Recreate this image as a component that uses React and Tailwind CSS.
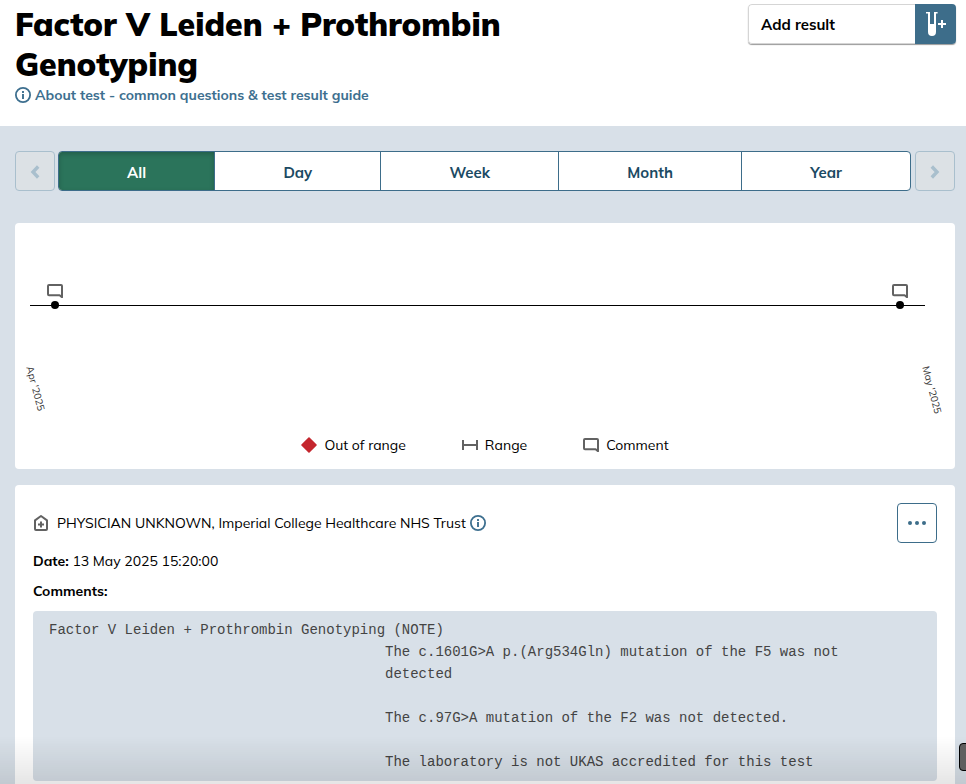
import React, { useState } from 'react';

const periods = ['All', 'Day', 'Week', 'Month', 'Year'];

const note = [
  'The c.1601G>A p.(Arg534Gln) mutation of the F5 was not detected',
  'The c.97G>A mutation of the F2 was not detected.',
  'The laboratory is not UKAS accredited for this test',
];

const InfoIcon = () => (
  <svg viewBox="0 0 16 16" className="w-4 h-4 shrink-0 text-[#3d6f8f]" fill="none" stroke="currentColor" aria-hidden="true">
    <circle cx="8" cy="8" r="7.1" strokeWidth="1.8" />
    <path d="M8 7v5" strokeWidth="1.9" />
    <path d="M8 4v2" strokeWidth="1.9" />
  </svg>
);

const CommentIcon = () => (
  <svg viewBox="0 0 16 14" className="w-4 h-[14px] shrink-0" fill="none" stroke="#626262" strokeWidth="2" strokeLinejoin="round" aria-hidden="true">
    <path d="M2 1h12a1 1 0 0 1 1 1v11.2L12.6 11.2H2a1 1 0 0 1-1-1V2a1 1 0 0 1 1-1z" />
  </svg>
);

const TubeIcon = () => (
  <svg viewBox="0 0 20 24" className="w-5 h-6" fill="#fff" aria-hidden="true">
    <path fillRule="evenodd" d="M0 0h4v12h4V0h3.6v1.6H10V20a4 4 0 0 1-8 0V1.6H0z" />
    <path d="M15 8h2v3h3v2h-3v3h-2v-3h-3v-2h3z" />
  </svg>
);

const Chevron = ({ flip }) => (
  <svg viewBox="0 0 10 14" className={flip ? 'w-[10px] h-[14px] rotate-180' : 'w-[10px] h-[14px]'} fill="none" stroke="#a9bfcd" strokeWidth="3.4" aria-hidden="true">
    <path d="M8.2 1.5L3 7L8.2 12.5" />
  </svg>
);

const Timeline = () => (
  <div className="relative h-[210px]">
    <div className="absolute left-[15px] right-[30px] top-[82px] h-px bg-black" />
    <div className="absolute left-8 top-[61px] flex flex-col items-center gap-[3px]">
      <CommentIcon />
      <span className="w-2 h-2 rounded-full bg-black" />
    </div>
    <div className="absolute right-[47px] top-[61px] flex flex-col items-center gap-[3px]">
      <CommentIcon />
      <span className="w-2 h-2 rounded-full bg-black" />
    </div>
    <span className="absolute left-5 top-[142px] origin-top-left rotate-75 whitespace-nowrap text-[10px] leading-3 text-[#333]">Apr '2025</span>
    <span className="absolute left-full top-[142px] origin-top-left rotate-75 -translate-x-6 whitespace-nowrap text-[10px] leading-3 text-[#333]">May '2025</span>
  </div>
);

const App = () => {
  const [period, setPeriod] = useState('All');

  return (
    <div className="min-h-screen bg-[#d8e0e8] font-['Mulish','Open_Sans',sans-serif] text-sm text-black">
      <header className="flex items-start justify-between bg-white pl-[15px] pr-[10px] pt-1 pb-5">
        <div>
          <h1 className="max-w-[560px] text-[32px] leading-10 font-black">Factor V Leiden + Prothrombin Genotyping</h1>
          <a href="#about" className="flex items-center gap-1 leading-[22px] font-bold text-[#3d6f8f]">
            <InfoIcon />
            About test - common questions &amp; test result guide
          </a>
        </div>
        <button className="flex w-52 h-10 overflow-hidden rounded-[4px] bg-white shadow-[0_1px_1px_rgba(0,0,0,0.4)]">
          <span className="flex flex-1 h-10 items-center rounded-l-[4px] border border-r-0 border-[#d5d5d5] pl-3 pt-px text-[15px] font-bold">Add result</span>
          <span className="flex w-[41px] h-10 items-center justify-center bg-[#3d6d8a]"><TubeIcon /></span>
        </button>
      </header>

      <main className="pl-[15px] pr-[11px] pt-[25px]">
        <div className="flex">
          <button disabled aria-label="Previous" className="flex w-10 h-10 items-center justify-center rounded-[4px] border border-[#a9bfcd] bg-[#dce1e5] pt-px">
            <Chevron />
          </button>
          <div className="mr-1 ml-[3px] flex flex-1 h-10 overflow-hidden rounded-[4px] border border-[#3d6d8a] bg-white">
            {periods.map(p => (
              <button
                key={p}
                onClick={() => setPeriod(p)}
                className={
                  p === period
                    ? 'flex-auto bg-[#2b745b] pt-[3px] text-[15px] font-bold text-white shadow-[inset_0_2px_5px_rgba(0,0,0,0.2)]'
                    : 'flex-auto border-l border-[#3d6d8a] pt-[3px] text-[15px] font-bold text-[#1b4a63]'
                }
              >
                {p}
              </button>
            ))}
          </div>
          <button disabled aria-label="Next" className="flex w-10 h-10 items-center justify-center rounded-[4px] border border-[#a9bfcd] bg-[#dce1e5] pt-px">
            <Chevron flip />
          </button>
        </div>

        <section className="mt-8 rounded-[4px] bg-white pb-3">
          <Timeline />
          <div className="flex justify-center gap-14 leading-6">
            <span className="flex items-center gap-[7px]">
              <svg viewBox="0 0 16 16" className="w-4 h-4" aria-hidden="true">
                <path d="M8 1l7 7-7 7-7-7z" fill="#c4262e" stroke="#c4262e" strokeWidth="1.6" strokeLinejoin="round" />
              </svg>
              Out of range
            </span>
            <span className="flex items-center gap-[7px]">
              <svg viewBox="0 0 16 10" className="w-4 h-[10px]" stroke="#626262" strokeWidth="2" aria-hidden="true">
                <path d="M1 0v10M15 0v10M1 5h14" />
              </svg>
              Range
            </span>
            <span className="flex items-center gap-[7px]">
              <CommentIcon />
              Comment
            </span>
          </div>
        </section>

        <section className="mt-4 rounded-t-[4px] bg-white px-[18px] pt-[18px] pb-4">
          <div className="flex items-center justify-between">
            <div className="flex items-center gap-1">
              <svg viewBox="0 0 16 18" className="mr-1 w-4 h-[18px]" fill="none" stroke="#626262" strokeWidth="2" strokeLinejoin="round" aria-hidden="true">
                <path d="M8 2L2 6.4V15a1 1 0 0 0 1 1h10a1 1 0 0 0 1-1V6.4z" />
                <path d="M8 7.4v6M5 10.4h6" />
              </svg>
              PHYSICIAN UNKNOWN, Imperial College Healthcare NHS Trust
              <InfoIcon />
            </div>
            <button aria-label="More options" className="flex w-10 h-10 items-center justify-center gap-[3px] rounded-[4px] border border-[#3d6d8a] bg-white">
              <span className="w-1 h-1 rounded-full bg-[#3d6d8a]" />
              <span className="w-1 h-1 rounded-full bg-[#3d6d8a]" />
              <span className="w-1 h-1 rounded-full bg-[#3d6d8a]" />
            </button>
          </div>
          <p className="mt-2 leading-5"><strong>Date:</strong> 13 May 2025 15:20:00</p>
          <p className="mt-[10px] leading-5 font-bold">Comments:</p>
          <div className="mt-[10px] rounded-[4px] bg-[#d8e0e8] px-4 py-2 font-['Liberation_Mono',monospace] leading-[22px] text-[#444]">
            <p>Factor V Leiden + Prothrombin Genotyping (NOTE)</p>
            <div className="flex flex-col gap-[22px] pl-[336px]">
              {note.map(line => (
                <p key={line} className="max-w-[480px]">{line}</p>
              ))}
            </div>
          </div>
        </section>
      </main>

      {/* fade at the bottom edge of the window */}
      <div className="pointer-events-none fixed inset-x-0 bottom-0 h-12 bg-linear-to-b from-transparent to-black/10" />
      <div className="fixed -right-1 bottom-[13px] w-[11px] h-7 rounded-[4px] border border-black bg-[#5f5f5f]" />
    </div>
  );
};

export default App;
